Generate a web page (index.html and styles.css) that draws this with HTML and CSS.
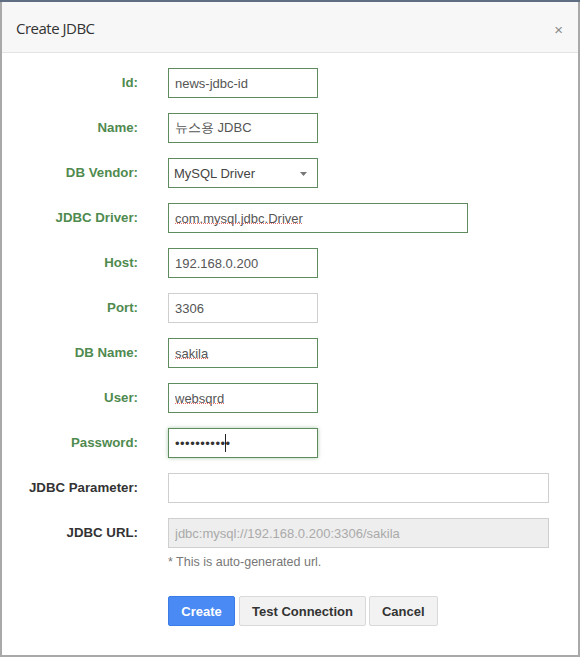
FILE: index.html
```html
<!DOCTYPE html>
<html>
<head>
<meta charset="utf-8">
<link rel="stylesheet" href="styles.css">
</head>
<body>
<div class="modal">
  <div class="modal-header">
    <h4 class="modal-title">Create JDBC</h4>
    <span class="close">×</span>
  </div>
  <div class="modal-body">
    <div class="row ok">
      <label class="lbl">Id:</label>
      <div class="ctl"><input class="inp short" type="text" value="news-jdbc-id"></div>
    </div>
    <div class="row ok">
      <label class="lbl">Name:</label>
      <div class="ctl"><input class="inp short" type="text" value="뉴스용 JDBC"></div>
    </div>
    <div class="row ok">
      <label class="lbl">DB Vendor:</label>
      <div class="ctl">
        <div class="wrap short">
          <select class="inp sel"><option>MySQL Driver</option></select>
          <svg class="arrow" width="7" height="4" viewBox="0 0 7 4"><path d="M0 0H7L3.5 4Z" fill="#777"/></svg>
        </div>
      </div>
    </div>
    <div class="row ok">
      <label class="lbl">JDBC Driver:</label>
      <div class="ctl">
        <div class="wrap mid">
          <input class="inp full" type="text" value="com.mysql.jdbc.Driver">
          <span class="squiggle" style="width:127px"></span>
        </div>
      </div>
    </div>
    <div class="row ok">
      <label class="lbl">Host:</label>
      <div class="ctl"><input class="inp short" type="text" value="192.168.0.200"></div>
    </div>
    <div class="row plain">
      <label class="lbl">Port:</label>
      <div class="ctl"><input class="inp short" type="text" value="3306"></div>
    </div>
    <div class="row ok">
      <label class="lbl">DB Name:</label>
      <div class="ctl">
        <div class="wrap short">
          <input class="inp full" type="text" value="sakila">
          <span class="squiggle" style="width:33px"></span>
        </div>
      </div>
    </div>
    <div class="row ok">
      <label class="lbl">User:</label>
      <div class="ctl">
        <div class="wrap short">
          <input class="inp full" type="text" value="websqrd">
          <span class="squiggle" style="width:49px"></span>
        </div>
      </div>
    </div>
    <div class="row ok">
      <label class="lbl">Password:</label>
      <div class="ctl">
        <div class="wrap short">
          <input class="inp full pw" type="password" value="websqrd1234">
          <span class="caret"></span>
        </div>
      </div>
    </div>
    <div class="row plain dark">
      <label class="lbl">JDBC Parameter:</label>
      <div class="ctl"><input class="inp long" type="text" value=""></div>
    </div>
    <div class="row plain dark">
      <label class="lbl">JDBC URL:</label>
      <div class="ctl">
        <input class="inp long disabled" type="text" value="jdbc:mysql://192.168.0.200:3306/sakila" disabled>
        <p class="help">* This is auto-generated url.</p>
      </div>
    </div>
    <div class="actions">
      <button class="btn primary">Create</button>
      <button class="btn">Test Connection</button>
      <button class="btn">Cancel</button>
    </div>
  </div>
</div>
</body>
</html>
```

FILE: styles.css
```css
html, body {
  margin: 0;
  padding: 0;
}
body {
  background: #5f6e82;
  width: 580px;
  height: 657px;
  padding-top: 2px;
  box-sizing: border-box;
  font-family: "Liberation Sans", Arial, sans-serif;
  overflow: hidden;
}
.modal {
  background: #fff;
  border: 2px solid #a9a9a9;
  border-top: 0;
  height: 655px;
  box-sizing: border-box;
}
.modal-header {
  background: #f7f7f7;
  border-bottom: 1px solid #e3e3e3;
  height: 51px;
  box-sizing: border-box;
  display: flex;
  align-items: center;
  justify-content: space-between;
  padding: 0 15px 0 14px;
}
.modal-title {
  margin: 0;
  font-family: "Open Sans", sans-serif;
  font-weight: 400;
  font-size: 15px;
  letter-spacing: -0.5px;
  color: #333;
  padding-top: 1px;
}
.close {
  font-family: "Liberation Sans", Arial, sans-serif;
  font-size: 15px;
  color: #8a8a8a;
  padding-top: 4px;
}
.modal-body {
  padding: 15px 29px 0 0;
}
.row {
  display: grid;
  grid-template-columns: 136px 1fr;
  column-gap: 30px;
  align-items: start;
  margin-bottom: 15px;
}
.lbl {
  text-align: right;
  font-weight: bold;
  font-size: 13.25px;
  line-height: 30px;
  color: #4f8a4f;
}
.dark .lbl {
  color: #333;
}
.ctl {
  display: flex;
  flex-direction: column;
  align-items: flex-start;
}
.inp {
  height: 30px;
  box-sizing: border-box;
  border: 1px solid #5e8c5e;
  border-radius: 0;
  padding: 0 6px;
  font-family: "Liberation Sans", Arial, sans-serif;
  font-size: 13px;
  color: #555;
  background: #fff;
  outline: none;
  margin: 0;
}
.plain .inp {
  border-color: #cfcfcf;
}
.short { width: 150px; }
.mid { width: 300px; }
.long { width: 381px; }
.full { width: 100%; }
.wrap {
  position: relative;
  height: 30px;
}
.squiggle {
  position: absolute;
  left: 7px;
  top: 20px;
  height: 0;
  border-bottom: 1px dotted #e86a6a;
}
.sel {
  width: 100%;
  appearance: none;
  -webkit-appearance: none;
  color: #444;
  padding-left: 5px;
}
.arrow {
  position: absolute;
  right: 11px;
  top: 14px;
}
.pw {
  box-shadow: 0 0 4px rgba(120, 170, 120, 0.6);
  color: #333;
  letter-spacing: 0.5px;
}
.caret {
  position: absolute;
  left: 57px;
  top: 6px;
  width: 1px;
  height: 18px;
  background: #222;
}
.disabled {
  background: #eee;
  color: #aaa;
}
.help {
  margin: 7px 0 0;
  font-size: 12.5px;
  color: #777;
  line-height: 14px;
}
.actions {
  display: flex;
  gap: 4px;
  padding-left: 166px;
  margin-top: 27px;
}
.btn {
  height: 30px;
  box-sizing: border-box;
  padding: 0 12px;
  border: 1px solid #d9d9d9;
  border-radius: 2px;
  background: #f2f2f2;
  color: #333;
  font-family: "Liberation Sans", Arial, sans-serif;
  font-weight: bold;
  font-size: 13px;
}
.btn.primary {
  background: #4a8af4;
  border-color: #3b7de8;
  color: #fff;
  width: 67px;
}
.btn:last-child {
  margin-left: -1px;
}
```
